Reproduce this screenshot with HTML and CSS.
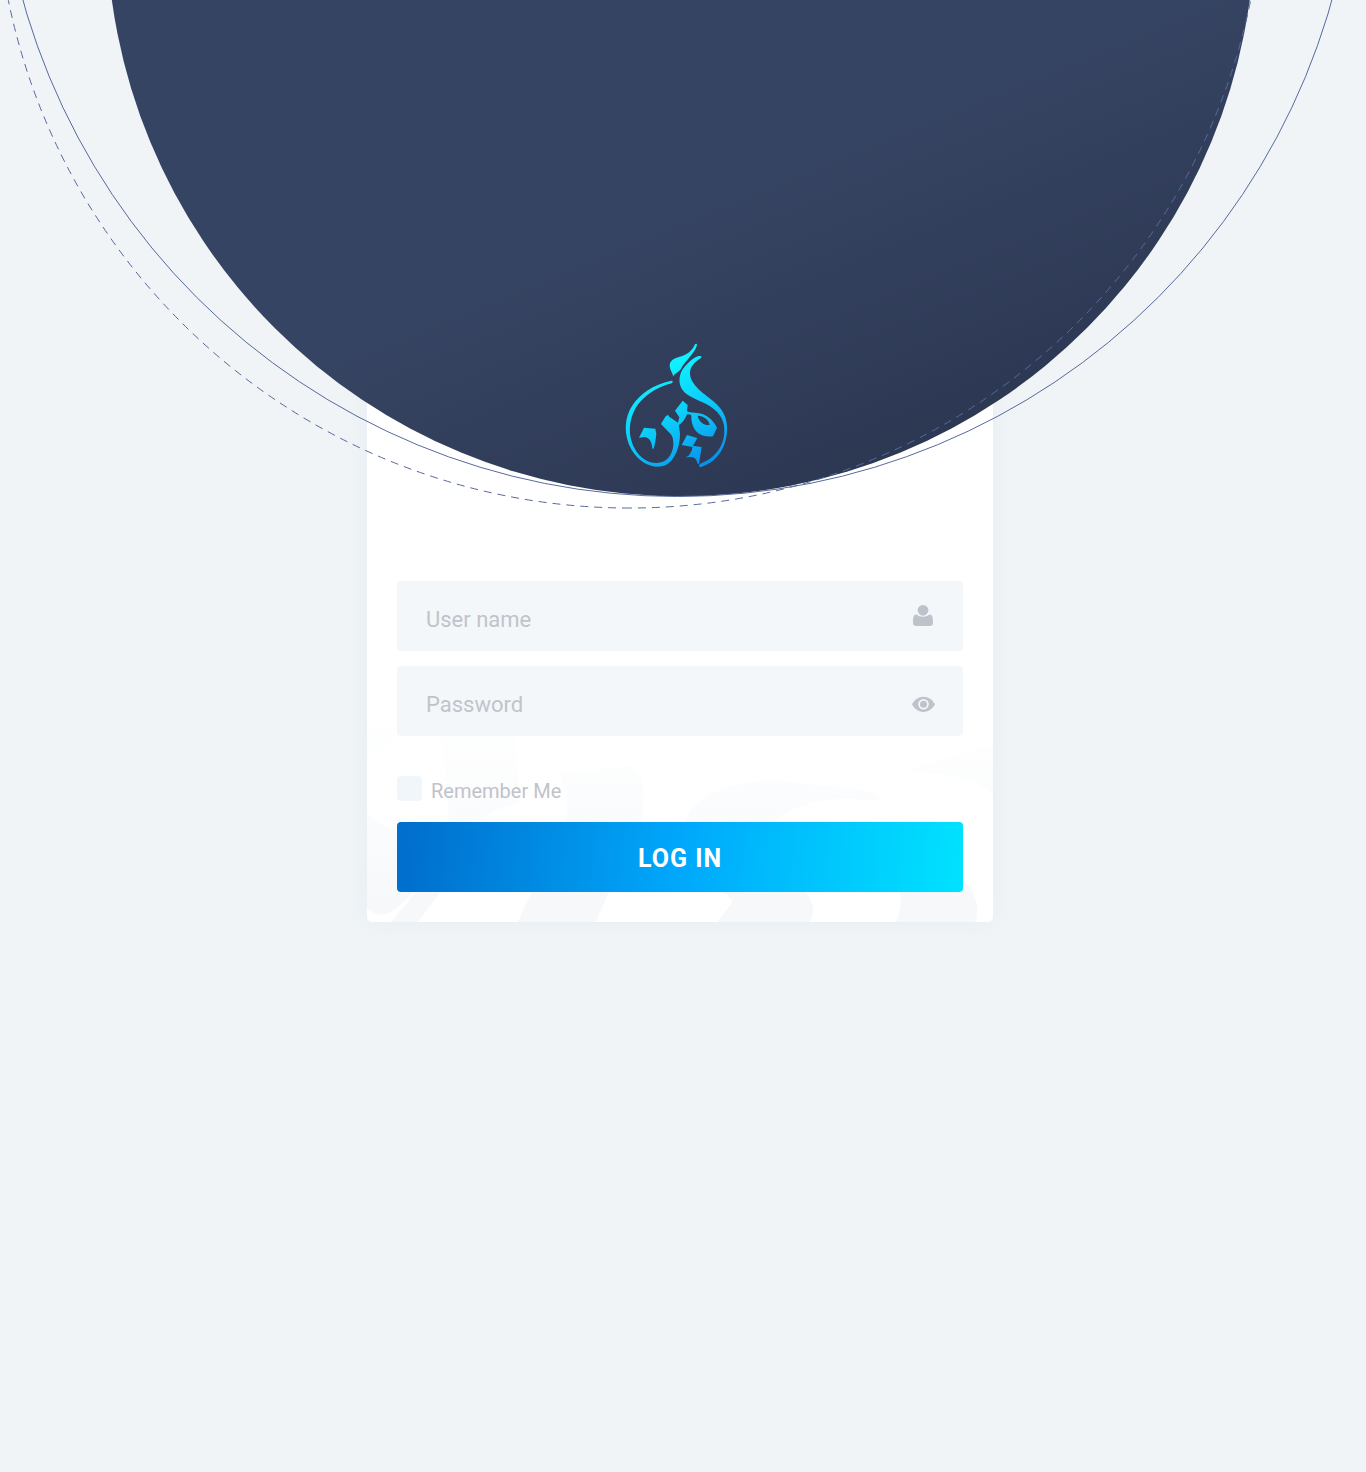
FILE: index.html
```html
<!DOCTYPE html>
<html lang="en">
<head>
<meta charset="utf-8">
<meta name="viewport" content="width=device-width, initial-scale=1">
<title>Log in</title>
<link rel="stylesheet" href="styles.css">
</head>
<body>
<div class="page">
  <svg class="backdrop" viewBox="0 0 1366 520" aria-hidden="true">
    <defs>
      <linearGradient id="navy" gradientUnits="userSpaceOnUse" x1="710" y1="190" x2="850" y2="530">
        <stop offset="0" stop-color="#364463"/>
        <stop offset="1" stop-color="#2b3650"/>
      </linearGradient>
    </defs>
    <circle cx="680.8" cy="-78" r="574.3" fill="url(#navy)"/>
    <circle class="ring" cx="677.4" cy="-183.3" r="679.8"/>
    <path class="ring" stroke-dasharray="8 5.95" d="M624 508A633.8 633.8 0 0 0 1263.3 -125.8"/>
    <path class="ring" stroke-dasharray="8 5.95" stroke-dashoffset="6" d="M624 508A633.8 633.8 0 0 1 -4.3 -125.8"/>
  </svg>

  <main class="card">
    <svg class="watermark" viewBox="367 710 626 212" aria-hidden="true">
      <defs>
        <linearGradient id="fade" gradientUnits="userSpaceOnUse" x1="0" y1="715" x2="0" y2="900">
          <stop offset="0" stop-color="#fff"/>
          <stop offset="0.5" stop-color="#fbfcfd"/>
          <stop offset="1" stop-color="#f6f8fa"/>
        </linearGradient>
      </defs>
      <g fill="url(#fade)">
        <path d="M367 716H420C405 738 385 742 367 759Z"/>
        <path d="M438 730C443 752 447 775 449 821L478 821C490 810 505 808 520 802C518 780 516 755 514 730Z"/>
        <path d="M561 773C590 772 610 767 632 766C644 775 645 792 642 818C636 845 612 882 596 922H518C535 880 568 840 567 805C567 790 562 785 561 773Z"/>
        <path d="M367 814C380 825 392 831 410 838V892H413C403 903 391 915 383 915C378 915 372 912 367 909Z"/>
        <path d="M391 922L418 889H443L418 922Z"/>
        <path d="M684 821C692 807 700 799 708 795C738 781 765 779 795 782C830 787 862 788 875 794C881 797 881 801 877 801C830 795 795 803 776 821L800 885C815 902 816 912 809 922H718C722 912 732 906 732 901C730 893 712 890 690 870Z"/>
        <path d="M911 768C940 763 968 750 982 747H993V794C972 778 955 773 911 773Z"/>
        <path d="M896 922C902 908 903 895 896 880L960 878C977 890 979 905 976 922Z"/>
      </g>
    </svg>

    <svg class="logo" viewBox="12 15 360 390" role="img" aria-label="Logo">
      <defs>
        <linearGradient id="flame" gradientUnits="userSpaceOnUse" x1="120" y1="120" x2="270" y2="390">
          <stop offset="0" stop-color="#10f0ff"/>
          <stop offset="0.5" stop-color="#0cc8f8"/>
          <stop offset="1" stop-color="#0890ea"/>
        </linearGradient>
      </defs>
      <g fill="url(#flame)">
        <path d="M237 28C232 41 220 54 204 61C184 69 161 71 161 92C162 107 170 112 172 125C175 114 191 112 196 100C203 82 238 54 243 30C243 26 239 25 237 28Z"/>
        <path d="M251 63C237 63 221 79 207 94C188 115 184 147 202 168C216 184 238 192 258 201C298 219 318 242 323 267C333 316 308 366 253 386C246 390 250 398 257 395C311 378 335 325 333 275C332 243 317 220 297 203C268 178 222 152 222 115C222 98 232 84 254 70C259 66 256 62 251 63Z"/>
        <path d="M166 137C110 149 72 178 52 207C24 246 21 300 47 345C73 388 116 404 150 390C178 376 192 334 192 298C191 284 189 273 189 270C200 264 208 252 213 238C222 239 228 238 226 248C227 270 235 285 247 295C261 306 278 305 291 304L303 278C291 254 272 237 243 234C232 232 220 234 213 228L215 210L200 197L177 227L190 247L186 263C178 257 168 251 160 246L156 239L148 245L135 267L166 299C179 322 171 360 149 376C122 394 81 382 59 346C34 306 37 258 60 217C82 184 118 157 167 145C172 142 171 137 166 137ZM245 242C264 243 279 254 281 270C265 272 248 260 245 242Z"/>
        <path d="M69 308L84 278L118 281L121 297C119 315 117 329 113 341L109 341C108 322 101 308 86 306C80 306 75 309 69 308Z"/>
        <path d="M197 330L213 300L244 309L229 336Z"/>
        <path d="M209 366C219 365 221 357 227 348L230 332L257 336L249 386H245C242 376 239 369 230 367C222 365 216 368 209 366Z"/>
      </g>
    </svg>

    <form class="form">
      <div class="field">
        <input class="field-input" type="text" placeholder="User name" aria-label="User name">
        <svg class="field-icon" viewBox="0 0 24 24" aria-hidden="true">
          <path d="M5.500 10.500C2.500 10.500 2 14 2 18C2 21 3 22 5.500 22H18.500C21 22 22 21 22 18C22 14 21.500 10.500 18.500 10.500C14.500 13.500 9.500 13.500 5.500 10.500Z"/>
          <circle cx="12" cy="6.300" r="5.400"/>
        </svg>
      </div>
      <div class="field">
        <input class="field-input" type="password" placeholder="Password" aria-label="Password">
        <button class="field-toggle" type="button" aria-label="Show password">
          <svg viewBox="0 0 24 24" aria-hidden="true">
            <path fill-rule="evenodd" d="M12.500 4.700C7.500 4.700 3.500 7.500 1 12.300C3.500 17 7.500 19.900 12.500 19.900S21.500 17 24 12.300C21.500 7.500 17.500 4.700 12.500 4.700ZM12.500 7A5.300 5.300 0 1 1 12.500 17.600A5.300 5.300 0 1 1 12.500 7Z"/>
            <circle cx="12.500" cy="12.300" r="3.500"/>
          </svg>
        </button>
      </div>
      <div class="remember">
        <input class="remember-box" type="checkbox" id="remember">
        <label class="remember-label" for="remember">Remember Me</label>
      </div>
      <button class="submit" type="submit">LOG IN</button>
    </form>
  </main>
</div>
</body>
</html>
```
FILE: styles.css
```css
* {
  box-sizing: border-box;
}

body {
  margin: 0;
  background: #f0f4f7;
  font-family: Roboto, "Liberation Sans", sans-serif;
  color: #bfc3ca;
}

.page {
  position: relative;
  display: flex;
  justify-content: center;
  min-height: 100vh;
  padding: 310px 6px 40px 0;
  overflow: hidden;
}

.backdrop {
  position: absolute;
  z-index: 1;
  top: 0;
  left: 50%;
  width: 1366px;
  height: 520px;
  margin-left: -683px;
  pointer-events: none;
}

.ring {
  fill: none;
  stroke: #566a9c;
  stroke-width: 1px;
}

.card {
  position: relative;
  align-self: flex-start;
  width: 100%;
  max-width: 626px;
  padding: 30px;
  border-radius: 5px;
  background: #fff;
  box-shadow: 0 0 24px rgba(210, 225, 232, 0.3);
}

.watermark {
  position: absolute;
  left: 0;
  bottom: 0;
  width: 100%;
  border-radius: 0 0 5px 5px;
}

.logo {
  position: relative;
  z-index: 2;
  display: block;
  width: 120px;
  height: 130px;
  margin: 0 auto 111px;
}

.form {
  position: relative;
  display: flex;
  flex-direction: column;
}

.field {
  display: flex;
  align-items: center;
  height: 70px;
  margin-bottom: 15px;
  padding-right: 28px;
  border-radius: 4px;
  background: #f3f7fa;
}

.field-input {
  flex: 1;
  min-width: 0;
  height: 100%;
  padding: 7px 16px 0 29px;
  border: 0;
  outline: 0;
  background: none;
  font: inherit;
  font-size: 22px;
  color: #364563;
}

.field-input::placeholder {
  color: #c0c4ca;
  opacity: 1;
}

.field-icon,
.field-toggle svg {
  display: block;
  width: 24px;
  height: 24px;
  fill: #bec3cb;
}

.field-toggle {
  padding: 5px 0 0;
  border: 0;
  background: none;
  cursor: pointer;
}

.remember {
  display: flex;
  align-items: center;
  gap: 9px;
  height: 25px;
  margin: 25px 0 21px;
}

.remember-box {
  appearance: none;
  width: 25px;
  height: 25px;
  margin: 0;
  border-radius: 4px;
  background: #f1f6fa;
}

.remember-box:checked {
  background: #00a8fa;
}

.remember-label {
  padding-top: 4px;
  font-size: 20px;
  line-height: 24px;
}

.submit {
  height: 70px;
  padding: 2px 0 0;
  border: 0;
  border-radius: 4px;
  background: linear-gradient(95deg, #006fcd 2%, #00a8fb 50%, #00e1ff 99%);
  font: inherit;
  font-size: 25px;
  font-weight: 700;
  letter-spacing: 1px;
  color: #fff;
  cursor: pointer;
}
```
